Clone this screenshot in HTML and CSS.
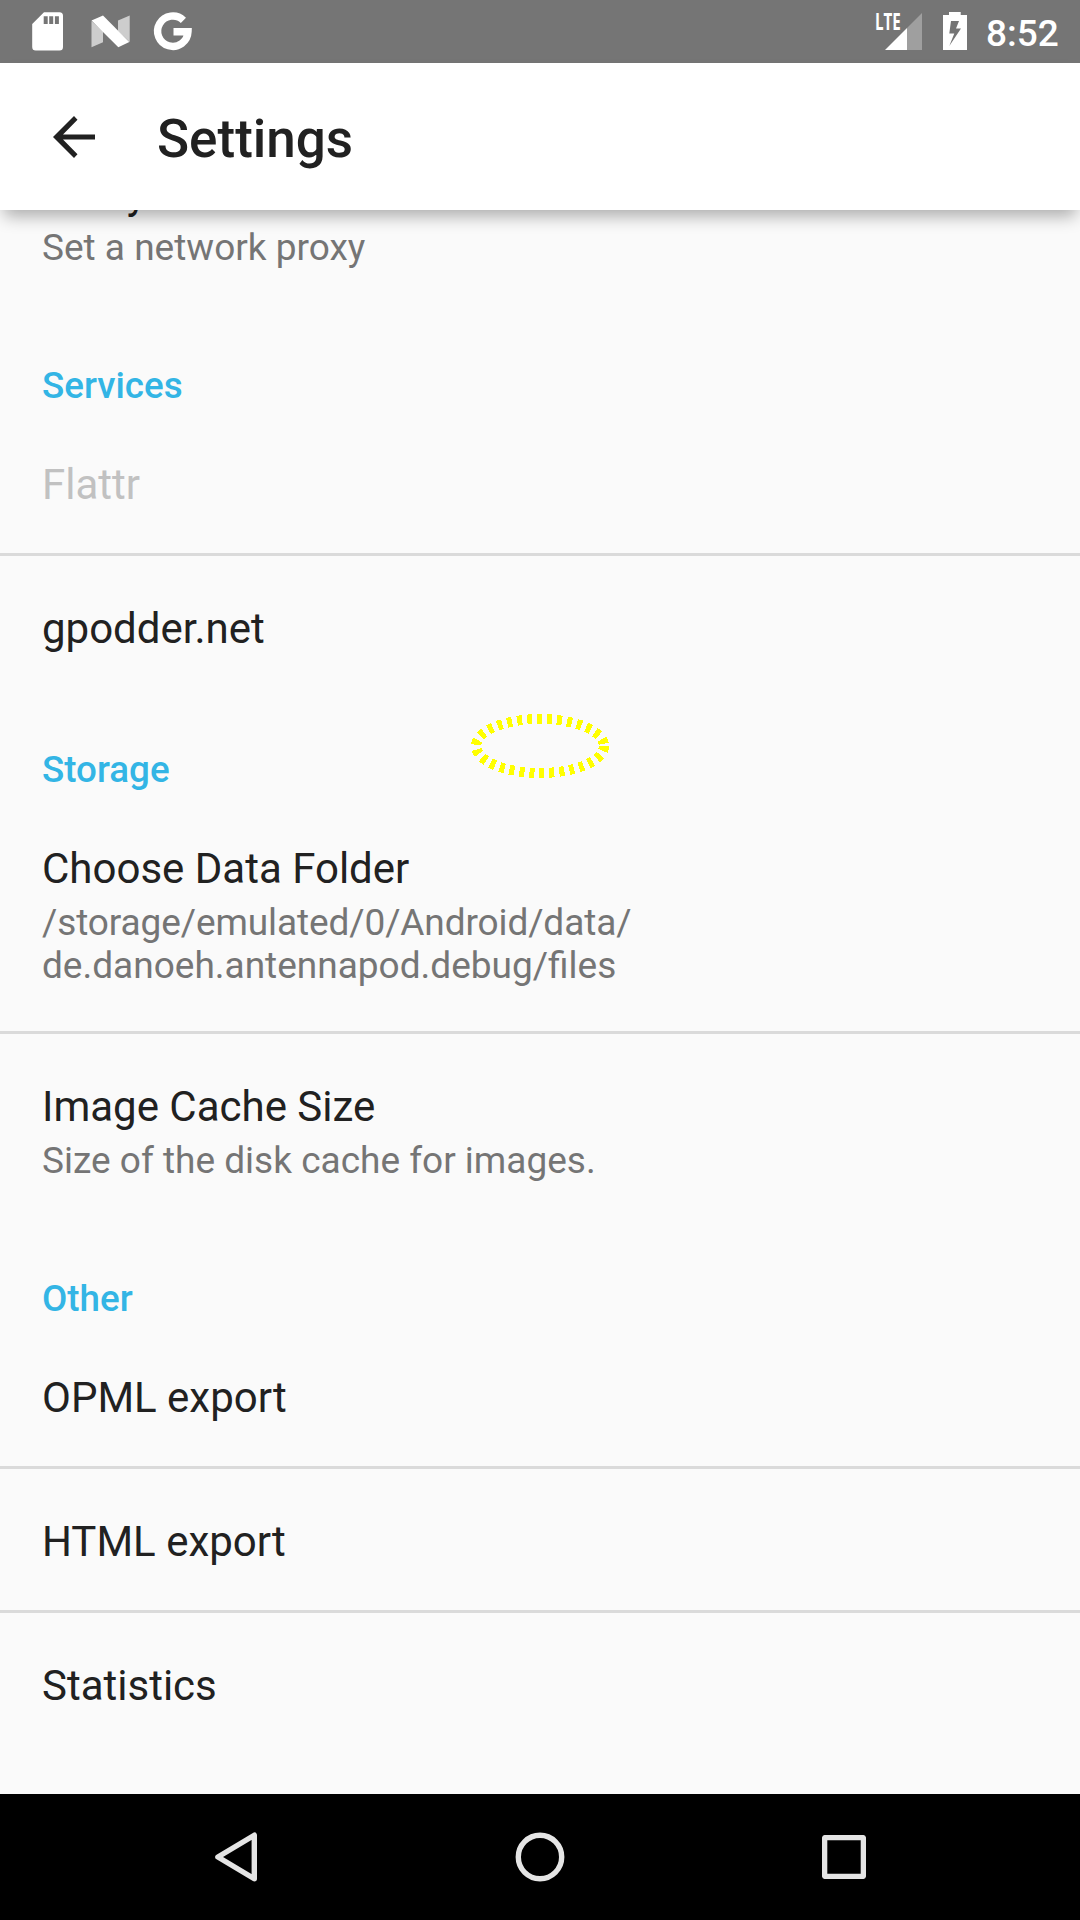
FILE: index.html
```html
<!DOCTYPE html>
<html lang="en">
<head>
<meta charset="utf-8">
<title>Settings</title>
<link rel="stylesheet" href="styles.css">
</head>
<body>
<div class="screen">
  <header class="status-bar">
    <svg class="status-left" width="240" height="63" viewBox="0 0 240 63">
      <path fill="#fff" fill-rule="evenodd" d="M44 12.3H59.500a3.500 3.500 0 0 1 3.500 3.500V47a3.500 3.500 0 0 1-3.500 3.500H35.700a3.500 3.500 0 0 1-3.500-3.500V24zM43.700 16.300v7.700h4v-7.700zM49.200 16.300v7.700h4v-7.700zM54.900 16.300v7.700h4v-7.700z"/>
      <path fill="#cdcdcd" d="M91.500 21L103 31.500V42.300L91.500 47.300zM129.700 15.500V42L118 31V20.500z"/>
      <path fill="#fff" d="M91.500 20.500L103 15.500L129.300 42L118.300 47.300z"/>
      <path fill="none" stroke="#fff" stroke-width="7.400" d="M183.400 20.300A15.200 15.200 0 1 0 188 31.700H173.500"/>
    </svg>
    <div class="status-right">
      <div class="signal">
        <span class="lte">LTE</span>
        <svg width="37" height="37" viewBox="0 0 37 37"><path fill="#9f9f9f" d="M37 0V37H22V15z"/><path fill="#fff" d="M0 37L22 15V37z"/></svg>
      </div>
      <svg class="battery" width="24" height="38" viewBox="0 0 24 38"><path fill="#fff" fill-rule="evenodd" d="M6 0H17.700V3H24V38H0V3H6zM8 9L6.300 21.500H11.300L6.300 34L18 16.500H13L16 9z"/></svg>
      <span class="clock">8:52</span>
    </div>
  </header>

  <div class="toolbar">
    <svg class="back" width="42" height="42" viewBox="0 0 42 42"><path fill="#212121" d="M42 18.400V23.600H10L24.500 38.200L21 42L0 21L21 0L24.500 3.700L10 18.400z"/></svg>
    <h1 class="title">Settings</h1>
  </div>

  <main class="viewport">
    <div class="list">
      <div class="item"><div class="name">Proxy</div><div class="summary">Set a network proxy</div></div>
      <h2 class="category">Services</h2>
      <div class="item disabled"><div class="name">Flattr</div></div>
      <div class="item divided"><div class="name">gpodder.net</div></div>
      <h2 class="category">Storage</h2>
      <div class="item"><div class="name">Choose Data Folder</div><div class="summary"><span class="path">/storage/emulated/0/Android/data/</span><br>de.danoeh.antennapod.debug/files</div></div>
      <div class="item divided"><div class="name">Image Cache Size</div><div class="summary">Size of the disk cache for images.</div></div>
      <h2 class="category">Other</h2>
      <div class="item"><div class="name">OPML export</div></div>
      <div class="item divided"><div class="name">HTML export</div></div>
      <div class="item divided"><div class="name">Statistics</div></div>
    </div>
  </main>

  <nav class="nav-bar">
    <svg width="44" height="50" viewBox="0 0 44 50"><path d="M40.300 3.200V46.800L3.900 25z"/></svg>
    <svg width="50" height="50" viewBox="0 0 50 50"><circle cx="25" cy="25" r="21.700"/></svg>
    <svg width="44" height="44" viewBox="0 0 44 44"><rect x="2.600" y="2.600" width="38.800" height="38.800" rx="1"/></svg>
  </nav>

  <svg class="marker" width="140" height="66" viewBox="0 0 140 66"><ellipse cx="70" cy="33" rx="64" ry="27"/></svg>
</div>
</body>
</html>
```
FILE: styles.css
```css
* { box-sizing: border-box; }
body { margin: 0; font-family: Roboto, "Noto Sans", sans-serif; }
h1, h2 { margin: 0; font-weight: 500; }
svg { display: block; flex: none; }

.screen {
  position: relative;
  display: flex;
  flex-direction: column;
  width: 1080px;
  height: 1920px;
  overflow: hidden;
  background: #fafafa;
  color: #212121;
}

.status-bar {
  display: flex;
  justify-content: space-between;
  flex: none;
  height: 63px;
  background: #757575;
  color: #fff;
}
.status-right { display: flex; align-items: flex-start; padding-right: 21px; }
.signal { position: relative; padding-top: 13px; }
.lte {
  position: absolute;
  left: -10px;
  top: 10px;
  font: 700 23px/22px "Open Sans", sans-serif;
  transform: scaleX(.66);
  transform-origin: left;
}
.battery { margin: 12px 19px 0 21px; }
.clock { width: 73px; padding-top: 12px; font-size: 37px; line-height: 43px; font-weight: 500; white-space: nowrap; }

.toolbar {
  position: relative;
  z-index: 1;
  display: flex;
  align-items: center;
  flex: none;
  gap: 62px;
  height: 147px;
  padding-left: 53px;
  background: #fff;
  box-shadow: 0 10px 16px -4px rgba(0, 0, 0, .32);
}
.title { padding-top: 5px; font-size: 53px; line-height: 62px; }

.viewport { flex: 1; min-height: 0; overflow: hidden; }
.list { margin-top: -89px; }
.item { padding: 48px 42px 44px; }
.divided { border-top: 3px solid #dadada; }
.name { font-size: 42px; line-height: 49px; }
.summary { margin-top: 8px; font-size: 37px; line-height: 43px; color: #757575; }
.path { letter-spacing: -.1px; }
.disabled .name { color: #c1c1c1; }
.category { padding: 51px 42px 5px; font-size: 36.75px; line-height: 43px; color: #33b5e5; }

.nav-bar {
  display: flex;
  align-items: center;
  justify-content: space-between;
  flex: none;
  height: 126px;
  padding: 0 214px;
  background: #000;
}
.nav-bar svg { fill: none; stroke: #e5e5e5; stroke-width: 5.4; stroke-linejoin: round; }

.marker { position: absolute; left: 470px; top: 713px; }
.marker ellipse { fill: none; stroke: #ff0; stroke-width: 10; stroke-dasharray: 5; shape-rendering: crispEdges; }
```
